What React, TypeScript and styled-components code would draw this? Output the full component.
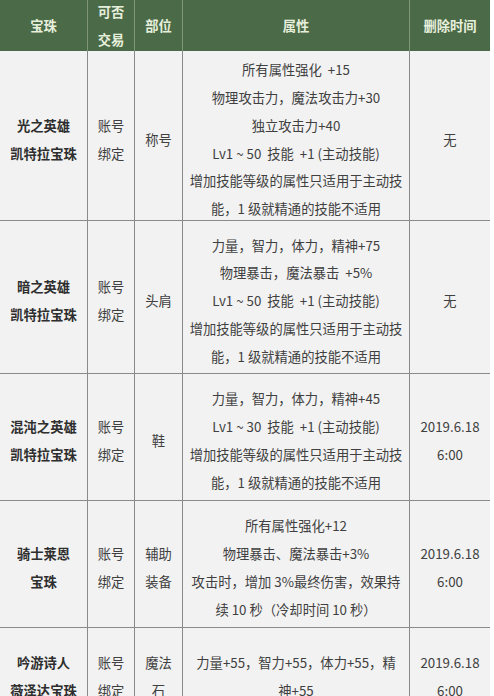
import { FC } from 'react';
import styled, { createGlobalStyle } from 'styled-components';

const GlobalStyle = createGlobalStyle`
  body {
    margin: 0;
    background: #ffffff;
    font-family: 'Noto Sans CJK SC', 'Noto Sans', sans-serif;
  }
`;

const columns = '88px 47px 48px 227px 80px';

const Table = styled.div`
  display: flex;
  flex-direction: column;
  width: 490px;
  overflow: hidden;
  height: 696px;
`;

const Row = styled.div<{ $height: number }>`
  display: grid;
  grid-template-columns: ${columns};
  grid-template-rows: ${(p) => p.$height}px;
  height: ${(p) => p.$height}px;
  flex-shrink: 0;
`;

const HeadCell = styled.div`
  display: flex;
  flex-direction: column;
  align-items: center;
  justify-content: center;
  min-height: 0;
  background: #4b6a47;
  border-right: 1px solid #7f957a;
  color: #e6efdc;
  font-size: 13.3px;
  font-weight: 700;
  line-height: 28px;
  text-align: center;
  &:last-child {
    border-right: none;
  }
`;

const Cell = styled.div<{ $bold?: boolean }>`
  display: flex;
  flex-direction: column;
  align-items: center;
  justify-content: center;
  min-height: 0;
  background: #f2f2f2;
  border-right: 1px solid #8a8a8a;
  border-bottom: 1px solid #8a8a8a;
  padding-top: 8px;
  box-sizing: border-box;
  color: ${(p) => (p.$bold ? '#2e2e2e' : '#404040')};
  font-size: 13.3px;
  font-weight: ${(p) => (p.$bold ? 700 : 400)};
  line-height: 27.8px;
  text-align: center;
  white-space: pre;
  &:last-child {
    border-right: none;
  }
`;

const Line = styled.span`
  display: block;
  flex-shrink: 0;
`;

type GemRow = {
  height: number;
  name: string[];
  trade: string[];
  slot: string[];
  stats: string[];
  expire: string[];
};

const rows: GemRow[] = [
  {
    height: 170,
    name: ['光之英雄', '凯特拉宝珠'],
    trade: ['账号', '绑定'],
    slot: ['称号'],
    stats: [
      '所有属性强化  +15',
      '物理攻击力，魔法攻击力+30',
      '独立攻击力+40',
      'Lv1 ~ 50  技能  +1 (主动技能)',
      '增加技能等级的属性只适用于主动技',
      '能，1 级就精通的技能不适用',
    ],
    expire: ['无'],
  },
  {
    height: 153,
    name: ['暗之英雄', '凯特拉宝珠'],
    trade: ['账号', '绑定'],
    slot: ['头肩'],
    stats: [
      '力量，智力，体力，精神+75',
      '物理暴击，魔法暴击  +5%',
      'Lv1 ~ 50  技能  +1 (主动技能)',
      '增加技能等级的属性只适用于主动技',
      '能，1 级就精通的技能不适用',
    ],
    expire: ['无'],
  },
  {
    height: 127,
    name: ['混沌之英雄', '凯特拉宝珠'],
    trade: ['账号', '绑定'],
    slot: ['鞋'],
    stats: [
      '力量，智力，体力，精神+45',
      'Lv1 ~ 30  技能  +1 (主动技能)',
      '增加技能等级的属性只适用于主动技',
      '能，1 级就精通的技能不适用',
    ],
    expire: ['2019.6.18', '6:00'],
  },
  {
    height: 127,
    name: ['骑士莱恩', '宝珠'],
    trade: ['账号', '绑定'],
    slot: ['辅助', '装备'],
    stats: [
      '所有属性强化+12',
      '物理暴击、魔法暴击+3%',
      '攻击时，增加 3%最终伤害，效果持',
      '续 10 秒（冷却时间 10 秒）',
    ],
    expire: ['2019.6.18', '6:00'],
  },
  {
    height: 91,
    name: ['吟游诗人', '薇泽达宝珠'],
    trade: ['账号', '绑定'],
    slot: ['魔法', '石'],
    stats: ['力量+55，智力+55，体力+55，精', '神+55'],
    expire: ['2019.6.18', '6:00'],
  },
];

const lines = (items: string[]) =>
  items.map((t, i) => <Line key={i}>{t}</Line>);

const App: FC = () => (
  <>
    <GlobalStyle />
    <Table>
      <Row $height={51}>
        <HeadCell>宝珠</HeadCell>
        <HeadCell>
          <Line>可否</Line>
          <Line>交易</Line>
        </HeadCell>
        <HeadCell>部位</HeadCell>
        <HeadCell>属性</HeadCell>
        <HeadCell>删除时间</HeadCell>
      </Row>
      {rows.map((r, idx) => (
        <Row key={`gem-${idx}`} $height={r.height}>
          <Cell $bold>{lines(r.name)}</Cell>
          <Cell>{lines(r.trade)}</Cell>
          <Cell>{lines(r.slot)}</Cell>
          <Cell>{lines(r.stats)}</Cell>
          <Cell>{lines(r.expire)}</Cell>
        </Row>
      ))}
    </Table>
  </>
);

export default App;
